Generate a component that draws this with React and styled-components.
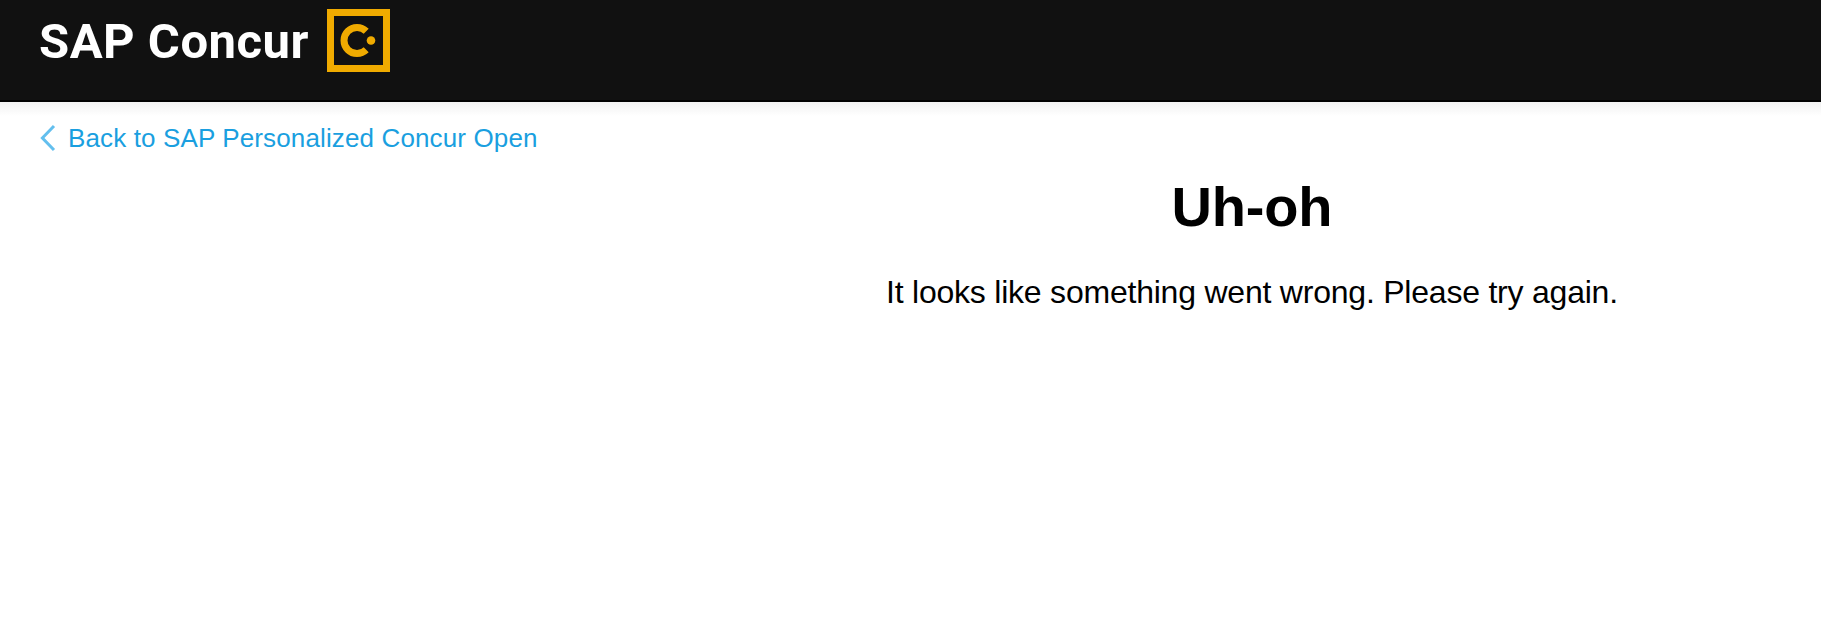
import styled, { createGlobalStyle } from "styled-components";

export default function App() {
  return (
    <Page>
      <GlobalStyle />
      <Header>
        <Brand>SAP Concur</Brand>
        <ConcurMark />
      </Header>
      <HeaderShadow />
      <BackLink href="#">
        <BackChevron />
        Back to SAP Personalized Concur Open
      </BackLink>
      <Content>
        <Message>
          <Title>Uh-oh</Title>
          <Description>
            It looks like something went wrong. Please try again.
          </Description>
        </Message>
      </Content>
    </Page>
  );
}

function ConcurMark() {
  return (
    <Mark viewBox="0 0 63 63" fill="none" stroke="#f0ab00" strokeWidth="7">
      <rect x="3.5" y="3.5" width="56" height="56" />
      <path d="M39.2 22.3A13 13 0 1 0 39.2 40.7" />
      <circle cx="44" cy="31.5" r="4.3" fill="#f0ab00" stroke="none" />
    </Mark>
  );
}

function BackChevron() {
  return (
    <Chevron viewBox="0 0 16 28" fill="none" stroke="#63bfee" strokeWidth="3">
      <path d="M14 2L2.4 14L14 26" />
    </Chevron>
  );
}

const GlobalStyle = createGlobalStyle`
  body {
    margin: 0;
    background: #fff;
    font-family: "Liberation Sans", Arial, sans-serif;
  }
`;

const Page = styled.div`
  height: 627px;
  overflow: hidden;
`;

const Header = styled.header`
  display: flex;
  box-sizing: border-box;
  height: 102px;
  padding: 9px 39px 0;
  background: #111;
  border-bottom: 2px solid #000;
`;

const Brand = styled.span`
  width: 288px;
  padding-top: 6px;
  color: #fff;
  font-family: Roboto, "Liberation Sans", sans-serif;
  font-size: 49px;
  font-weight: 700;
  line-height: 54px;
  letter-spacing: 0.5px;
  white-space: nowrap;
`;

const Mark = styled.svg`
  width: 63px;
  height: 63px;
`;

const HeaderShadow = styled.div`
  height: 14px;
  background: linear-gradient(#f0f0f0, #fff);
`;

const BackLink = styled.a`
  display: flex;
  width: max-content;
  align-items: center;
  gap: 12px;
  height: 30px;
  margin: 7px 0 0 40px;
  color: #1a9fe0;
  font-size: 26px;
  letter-spacing: 0.13px;
  text-decoration: none;
`;

const Chevron = styled.svg`
  width: 16px;
  height: 28px;
`;

const Content = styled.main`
  display: grid;
  grid-template-columns: 3fr 5fr;
`;

const Message = styled.section`
  grid-column: 2;
  text-align: center;
`;

const Title = styled.h1`
  margin: 22px 0 0;
  font-size: 56px;
  line-height: 64px;
  letter-spacing: -0.2px;
`;

const Description = styled.p`
  margin: 34px 0 0;
  font-size: 32px;
  line-height: 38px;
  letter-spacing: -0.22px;
`;
